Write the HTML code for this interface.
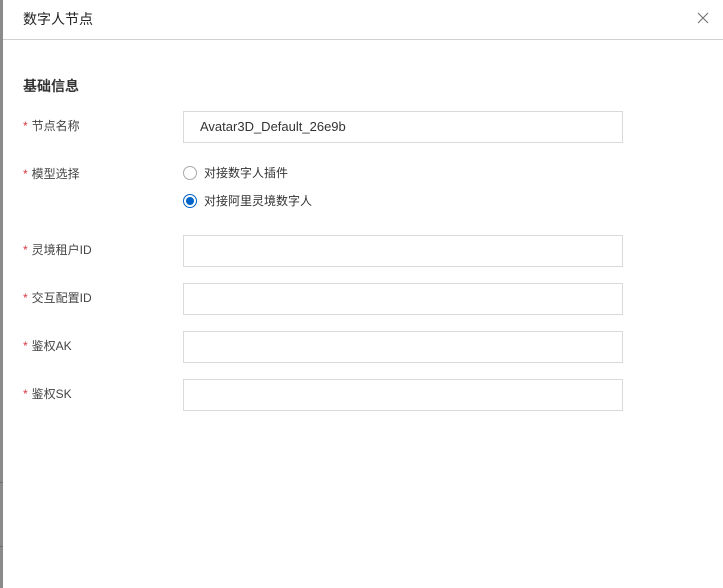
<!DOCTYPE html>
<html><head><meta charset="utf-8"><style>
*{margin:0;padding:0;box-sizing:border-box}
body{width:723px;height:588px;overflow:hidden;background:#fff;font-family:"Liberation Sans","Noto Sans CJK SC",sans-serif;color:#333;position:relative}
.strip{position:absolute;left:0;top:0;width:3px;height:588px;background:#8a8a8a}
.hl{position:absolute;left:0;width:3px;height:1px;background:#6e6e6e}
.hdr{position:absolute;left:3px;top:0;right:0;height:40px;border-bottom:1px solid #d0d0d0}
.title{position:absolute;left:23px;top:9px;font-size:14px;color:#222}
.x{position:absolute;left:697px;top:12px}
.sec{position:absolute;left:23px;top:76px;font-size:14px;font-weight:bold;color:#333}
.lab{position:absolute;left:23px;font-size:12px;color:#444}
.lab b{color:#d9363e;font-weight:normal;margin-right:4px}
.inp{position:absolute;left:183px;width:440px;height:32px;border:1px solid #d9d9d9;background:#fff;font-size:13px;padding:7px 16px;color:#333}
.rad{position:absolute;left:183px;font-size:12px;color:#333}
.rad i{display:inline-block;width:14px;height:14px;border-radius:50%;border:1px solid #aaa;vertical-align:-3px;margin-right:7px;position:relative}
.rad i.on{border-color:#0064c8}
.rad i.on:after{content:"";position:absolute;left:2px;top:2px;width:8px;height:8px;border-radius:50%;background:#0064c8}
</style></head><body>
<div class="strip"></div><div class="hl" style="top:482px"></div><div class="hl" style="top:546px"></div>
<div class="hdr"></div>
<div class="title">数字人节点</div>
<svg class="x" width="12" height="12" viewBox="0 0 12 12"><path d="M1 1L11 11M11 1L1 11" stroke="#777" stroke-width="1.2"/></svg>
<div class="sec">基础信息</div>
<div class="lab" style="top:117px"><b>*</b>节点名称</div>
<div class="inp" style="top:111px">Avatar3D_Default_26e9b</div>
<div class="lab" style="top:165px"><b>*</b>模型选择</div>
<div class="rad" style="top:164px"><i></i>对接数字人插件</div>
<div class="rad" style="top:192px"><i class="on"></i>对接阿里灵境数字人</div>
<div class="lab" style="top:241px"><b>*</b>灵境租户ID</div>
<div class="inp" style="top:235px"></div>
<div class="lab" style="top:289px"><b>*</b>交互配置ID</div>
<div class="inp" style="top:283px"></div>
<div class="lab" style="top:337px"><b>*</b>鉴权AK</div>
<div class="inp" style="top:331px"></div>
<div class="lab" style="top:385px"><b>*</b>鉴权SK</div>
<div class="inp" style="top:379px"></div>
</body></html>
